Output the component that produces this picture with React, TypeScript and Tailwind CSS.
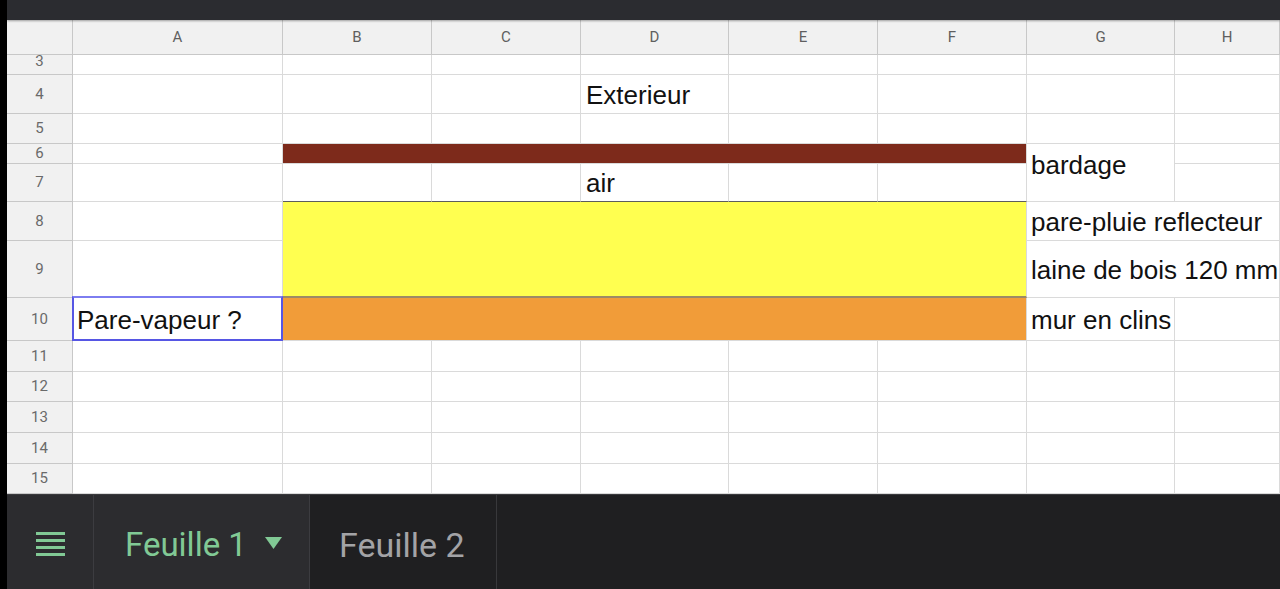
import type { ReactNode } from "react";

const COLS = ["A", "B", "C", "D", "E", "F", "G", "H"];

// Plain cell: gridline on the right and bottom, text left, centred vertically.
function Cell({ children, className = "" }: { children?: ReactNode; className?: string }) {
  return (
    <div
      className={`flex items-center whitespace-nowrap border-b border-r border-[#dadada] pl-[4px] pt-[1px] text-[26px] leading-[30px] text-[#111] ${className}`}
    >
      {children}
    </div>
  );
}

function RowHead({ n }: { n: number }) {
  return (
    <div className="flex items-center justify-center overflow-hidden border-b border-r border-[#c8c8c8] bg-[#f1f1f1] font-['Roboto',sans-serif] text-[15px] text-[#6a6a6a]">
      {n}
    </div>
  );
}

function Blank({ count }: { count: number }) {
  return (
    <>
      {Array.from({ length: count }).map((_, i) => (
        <Cell key={i} />
      ))}
    </>
  );
}

function Sheet() {
  return (
    <div className="grid grid-cols-[66px_210px_149px_149px_148px_149px_149px_148px_1fr] grid-rows-[35px_20px_39px_30px_20px_38px_39px_57px_43px_31px_30px_31px_31px_30px] bg-white font-['Liberation_Sans',Arial,sans-serif]">
      {/* column headers */}
      <div className="border-b border-r border-[#c8c8c8] bg-[#f1f1f1]" />
      {COLS.map((c) => (
        <div
          key={c}
          className="flex items-center justify-center border-b border-r border-[#c8c8c8] bg-[#f1f1f1] font-['Roboto',sans-serif] text-[15px] text-[#5f5f5f]"
        >
          {c}
        </div>
      ))}

      {/* row 3, half scrolled under the header */}
      <div className="flex items-start justify-center overflow-hidden border-b border-r border-[#c8c8c8] bg-[#f1f1f1] font-['Roboto',sans-serif] text-[15px] leading-[17px] text-[#6a6a6a]">
        <span className="-mt-[2px]">3</span>
      </div>
      <Blank count={8} />

      {/* row 4 */}
      <RowHead n={4} />
      <Blank count={3} />
      <Cell className="pl-[5px]">Exterieur</Cell>
      <Blank count={4} />

      {/* row 5 */}
      <RowHead n={5} />
      <Blank count={8} />

      {/* row 6 */}
      <RowHead n={6} />
      <Cell />
      <Cell className="col-span-5 bg-[#7d2a1b]" />
      <Cell className="row-span-2 items-start pt-[6px]">bardage</Cell>
      <Cell />

      {/* row 7 */}
      <RowHead n={7} />
      <Cell />
      <Cell className="border-b-[#5c5c5c]" />
      <Cell className="border-b-[#5c5c5c]" />
      <Cell className="border-b-[#5c5c5c] pl-[5px]">air</Cell>
      <Cell className="border-b-[#5c5c5c]" />
      <Cell className="border-b-[#5c5c5c]" />
      <Cell />

      {/* row 8 */}
      <RowHead n={8} />
      <Cell />
      <div className="col-span-5 row-span-2 border-b-2 border-r border-[#dadada] border-b-[#9c8a66] bg-[#ffff50]" />
      <Cell className="col-span-2">pare-pluie reflecteur</Cell>

      {/* row 9 */}
      <RowHead n={9} />
      <Cell />
      <Cell className="col-span-2 overflow-hidden">laine de bois 120 mm</Cell>

      {/* row 10 */}
      <RowHead n={10} />
      <Cell className="relative pl-[3px]">
        Pare-vapeur ?
        <span className="absolute -bottom-px -left-px -right-px -top-[2px] border-2 border-[#5656e4] border-t-[#7d7df0]" />
      </Cell>
      <Cell className="col-span-5 bg-[#f19c39]" />
      <Cell>mur en clins</Cell>
      <Cell />

      {[11, 12, 13, 14, 15].map((n) => (
        <div key={n} className="contents">
          <RowHead n={n} />
          <Blank count={8} />
        </div>
      ))}
    </div>
  );
}

function TabBar() {
  return (
    <div className="flex h-[95px] border-t border-[#3a3a3d] bg-[#1f1f21] font-['Roboto',sans-serif]">
      <div className="flex w-[87px] items-center justify-center border-r border-[#3c3c40] bg-[#2c2c2f] pt-[4px]">
        <div className="flex w-[29px] flex-col gap-[4px]">
          <span className="h-[3px] bg-[#81c995]" />
          <span className="h-[3px] bg-[#81c995]" />
          <span className="h-[3px] bg-[#81c995]" />
          <span className="h-[3px] bg-[#81c995]" />
        </div>
      </div>
      <div className="flex w-[216px] items-center gap-[18px] border-r border-[#3c3c40] bg-[#2c2c2f] pl-[31px] pt-[6px] text-[33px] text-[#81c995]">
        <span>Feuille 1</span>
        <svg width="17" height="12" viewBox="0 0 17 12" className="-mt-[4px]">
          <path d="M0 0h17L8.5 12z" fill="#81c995" />
        </svg>
      </div>
      <div className="flex w-[187px] items-center border-r border-[#38383b] pl-[29px] pt-[6px] text-[34px] text-[#a3a3a6]">
        Feuille 2
      </div>
    </div>
  );
}

export default function App() {
  return (
    <div className="flex h-[589px] w-full overflow-hidden bg-black">
      <div className="w-[7px] shrink-0 bg-black" />
      <div className="flex min-w-0 flex-1 flex-col">
        <div className="relative z-10 h-[20px] shrink-0 bg-[#2b2c30] shadow-[0_1px_2px_rgba(0,0,0,0.35)]" />
        <Sheet />
        <TabBar />
      </div>
    </div>
  );
}
